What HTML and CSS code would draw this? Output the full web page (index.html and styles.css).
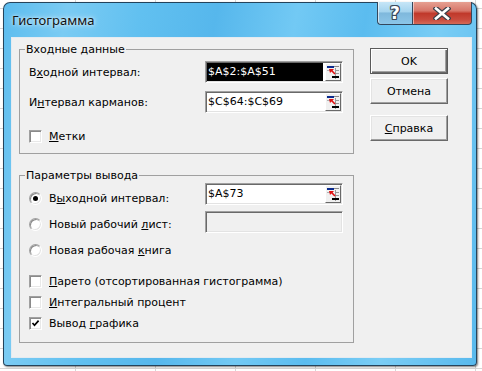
FILE: index.html
```html
<!DOCTYPE html>
<html lang="ru">
<head>
<meta charset="utf-8">
<title>Гистограмма</title>
<link rel="stylesheet" href="styles.css">
</head>
<body>
<div class="window">
  <div class="titlebar">
    <div class="title">Гистограмма</div>
    <div class="caption">
      <div class="cbtn help"><span class="qmark">?</span></div>
      <div class="cbtn close">
        <svg width="18" height="13" viewBox="0 0 18 13">
          <path d="M3 1.5 L15 11.5 M15 1.5 L3 11.5" stroke="#3a3f48" stroke-width="5" stroke-linecap="square" fill="none"/>
          <path d="M3 1.5 L15 11.5 M15 1.5 L3 11.5" stroke="#ffffff" stroke-width="2.6" stroke-linecap="square" fill="none"/>
        </svg>
      </div>
    </div>
  </div>
  <div class="client">
    <div class="groups">
      <fieldset class="group g1">
        <legend>Входные данные</legend>
        <div class="row">
          <span class="lbl">В<u>х</u>одной интервал:</span>
          <div class="refedit"><span class="val sel">$A$2:$A$51</span><span class="refbtn"><svg class="refico" width="12" height="13" viewBox="0 0 12 13"><rect x="0" y="0" width="7" height="2" fill="#0a2a8c"/><rect x="7" y="0" width="5" height="1" fill="#8a8a8a"/><rect x="8" y="2" width="1" height="11" fill="#9a9a9a"/><rect x="9" y="4" width="3" height="1" fill="#9a9a9a"/><rect x="9" y="7" width="3" height="1" fill="#9a9a9a"/><rect x="0" y="4" width="3" height="1" fill="#b0b0b0"/><path d="M2 3 L7 3 L5.6 4.4 L8.6 7.4 L7.4 8.6 L4.4 5.6 L3 7 Z" fill="#e01010"/><rect x="5" y="10" width="7" height="2" fill="#000"/></svg></span></div>
        </div>
        <div class="row">
          <span class="lbl">И<u>н</u>тервал карманов:</span>
          <div class="refedit"><span class="val">$C$64:$C$69</span><span class="refbtn"><svg class="refico" width="12" height="13" viewBox="0 0 12 13"><rect x="0" y="0" width="7" height="2" fill="#0a2a8c"/><rect x="7" y="0" width="5" height="1" fill="#8a8a8a"/><rect x="8" y="2" width="1" height="11" fill="#9a9a9a"/><rect x="9" y="4" width="3" height="1" fill="#9a9a9a"/><rect x="9" y="7" width="3" height="1" fill="#9a9a9a"/><rect x="0" y="4" width="3" height="1" fill="#b0b0b0"/><path d="M2 3 L7 3 L5.6 4.4 L8.6 7.4 L7.4 8.6 L4.4 5.6 L3 7 Z" fill="#e01010"/><rect x="5" y="10" width="7" height="2" fill="#000"/></svg></span></div>
        </div>
        <div class="opt chk-first">
          <span class="cb"></span><span><u>М</u>етки</span>
        </div>
      </fieldset>

      <fieldset class="group g2">
        <legend>Параметры вывода</legend>
        <div class="out">
          <div class="radios">
            <div class="opt"><span class="rb on"></span><span>В<u>ы</u>ходной интервал:</span></div>
            <div class="opt"><span class="rb"></span><span>Новый рабочий <u>л</u>ист:</span></div>
            <div class="opt"><span class="rb"></span><span>Новая рабочая <u>к</u>нига</span></div>
          </div>
          <div class="inputs">
            <div class="refedit"><span class="val">$A$73</span><span class="refbtn"><svg class="refico" width="12" height="13" viewBox="0 0 12 13"><rect x="0" y="0" width="7" height="2" fill="#0a2a8c"/><rect x="7" y="0" width="5" height="1" fill="#8a8a8a"/><rect x="8" y="2" width="1" height="11" fill="#9a9a9a"/><rect x="9" y="4" width="3" height="1" fill="#9a9a9a"/><rect x="9" y="7" width="3" height="1" fill="#9a9a9a"/><rect x="0" y="4" width="3" height="1" fill="#b0b0b0"/><path d="M2 3 L7 3 L5.6 4.4 L8.6 7.4 L7.4 8.6 L4.4 5.6 L3 7 Z" fill="#e01010"/><rect x="5" y="10" width="7" height="2" fill="#000"/></svg></span></div>
            <div class="refedit disabled"><span class="val"></span></div>
          </div>
        </div>
        <div class="checks">
          <div class="opt"><span class="cb"></span><span><u>П</u>арето (отсортированная гистограмма)</span></div>
          <div class="opt"><span class="cb"></span><span><u>И</u>нтегральный процент</span></div>
          <div class="opt"><span class="cb checked"><svg width="9" height="9" viewBox="0 0 9 9"><path d="M1.5 4 L3.5 6.2 L7.6 1.6" stroke="#000" stroke-width="1.7" fill="none"/></svg></span><span>Вывод <u>г</u>рафика</span></div>
        </div>
      </fieldset>
    </div>

    <div class="buttons">
      <div class="btn default">OK</div>
      <div class="btn">Отмена</div>
      <div class="btn help-btn"><span><u>С</u>правка</span></div>
    </div>
  </div>
</div>
</body>
</html>
```
FILE: styles.css
```css
* { box-sizing: border-box; }

body {
  margin: 0;
  width: 482px;
  height: 371px;
  overflow: hidden;
  background-color: #ffffff;
  background-image:
    linear-gradient(to right, #d6d6d6 1px, transparent 1px),
    linear-gradient(to bottom, #d6d6d6 1px, transparent 1px);
  background-size: 80px 20px;
  background-position: 315px 0, 0 8px;
  font-family: "DejaVu Sans", sans-serif;
  font-size: 11px;
  color: #000;
}

.window {
  margin: 2px 0 0 3px;
  width: 474px;
  height: 364px;
  border: 1px solid rgba(25, 45, 65, 0.85);
  border-radius: 7px 7px 4px 4px;
  background:
    linear-gradient(100deg, #5cbcee 0%, #7acbf3 12%, #61c0f0 26%, #56b7ec 40%, #72c9f4 55%, #5bbcef 68%, #7acdf5 82%, #58b9ed 100%);
  padding: 0 4px 7px 7px;
  display: flex;
  flex-direction: column;
  box-shadow: 1px 1px 2px rgba(0, 0, 0, 0.5);
}

.titlebar {
  height: 34px;
  display: flex;
  align-items: center;
  justify-content: space-between;
}

.title {
  font-family: "Noto Sans", "Open Sans", sans-serif;
  font-size: 13px;
  padding-left: 1px;
  padding-bottom: 1px;
  color: #111;
  text-shadow: 0 0 6px rgba(255, 255, 255, 0.9), 0 0 3px rgba(255, 255, 255, 0.7);
}

.caption {
  align-self: flex-start;
  margin-top: -1px;
  display: flex;
  height: 23px;
}

.cbtn {
  height: 23px;
  display: flex;
  align-items: center;
  justify-content: center;
  border: 1px solid #34475c;
  border-top: none;
}

.help {
  width: 35px;
  border-right: none;
  border-radius: 0 0 0 4px;
  background: linear-gradient(to bottom, #c6e6f7 0%, #a4d3ee 45%, #7fb8dc 50%, #8cc6e8 100%);
  box-shadow: inset 1px 0 0 rgba(255, 255, 255, 0.6);
}

.qmark {
  font-family: "DejaVu Sans", sans-serif;
  font-weight: bold;
  font-size: 17px;
  line-height: 17px;
  color: #fff;
  text-shadow: 1px 0 0 #3a4a5e, -1px 0 0 #3a4a5e, 0 1px 0 #3a4a5e, 0 -1px 0 #3a4a5e,
    1px 1px 0 #3a4a5e, -1px -1px 0 #3a4a5e, 1px -1px 0 #3a4a5e, -1px 1px 0 #3a4a5e;
}

.close {
  width: 60px;
  border-radius: 0 0 4px 0;
  background: linear-gradient(to bottom, #e6a092 0%, #d7776a 40%, #c0392b 52%, #c94b3d 80%, #d66a57 100%);
  box-shadow: inset 1px 0 0 rgba(255, 255, 255, 0.5);
}

.client {
  flex: 1;
  background: #f0f0f0;
  border: 1px solid #e4ebf1;
  display: grid;
  grid-template-columns: 335px 78px;
  column-gap: 16px;
  align-items: start;
  padding: 5px 0 0 7px;
}

.groups {
  display: flex;
  flex-direction: column;
  gap: 15px;
}

.group {
  margin: 0;
  min-width: 0;
  border: 1px solid #a0a0a0;
  padding: 0 10px 0 9px;
}

.group legend {
  margin-left: -4px;
  padding: 0 1px;
  line-height: 13px;
}

.g1 {
  padding-top: 5px;
  padding-bottom: 9px;
}

.row {
  display: flex;
  align-items: center;
  height: 22px;
}

.row + .row {
  margin-top: 8px;
}

.lbl {
  width: 176px;
}

.refedit {
  margin-left: auto;
  width: 138px;
  height: 22px;
  display: flex;
  padding: 1px;
  border: 1px solid;
  border-color: #a0a0a0 #ffffff #ffffff #a0a0a0;
  box-shadow: inset 1px 1px 0 #696969, inset -1px -1px 0 #e3e3e3;
  background: #ffffff;
}

.refedit.disabled {
  background: #f0f0f0;
}

.val {
  flex: 1;
  line-height: 18px;
  padding-left: 1px;
  white-space: nowrap;
}

.val.sel {
  background: #000;
  color: #fff;
  margin-right: 2px;
}

.refbtn {
  width: 16px;
  height: 18px;
  background: #f0f0f0;
  border: 1px solid;
  border-color: #ffffff #696969 #696969 #ffffff;
  display: flex;
  align-items: center;
  justify-content: center;
}

.opt {
  display: flex;
  align-items: center;
  height: 16px;
  gap: 7px;
  white-space: nowrap;
}

.chk-first {
  margin-top: 15px;
}

.cb {
  width: 13px;
  height: 13px;
  flex: none;
  background: #ffffff;
  border: 1px solid;
  border-color: #a0a0a0 #ffffff #ffffff #a0a0a0;
  box-shadow: inset 1px 1px 0 #8a8a8a, inset -1px -1px 0 #e8e8e8;
  display: flex;
  align-items: center;
  justify-content: center;
}

.rb {
  width: 13px;
  height: 13px;
  flex: none;
  border-radius: 50%;
  background: #ffffff;
  border: 1px solid;
  border-color: #a0a0a0 #ffffff #ffffff #a0a0a0;
  box-shadow: inset 1px 1px 0 #8a8a8a, inset -1px -1px 0 #e3e3e3;
  display: flex;
  align-items: center;
  justify-content: center;
}

.rb.on::after {
  content: "";
  width: 5px;
  height: 5px;
  border-radius: 50%;
  background: #000;
}

.g2 {
  padding-top: 1px;
  padding-bottom: 11px;
}

.out {
  display: flex;
}

.radios {
  display: flex;
  flex-direction: column;
  gap: 10px;
  margin-top: 7px;
}

.inputs {
  margin-left: auto;
  display: flex;
  flex-direction: column;
  gap: 6px;
}

.checks {
  margin-top: 15px;
  display: flex;
  flex-direction: column;
  gap: 5px;
}

.buttons {
  display: flex;
  flex-direction: column;
  margin-top: 5px;
}

.btn {
  height: 26px;
  display: flex;
  align-items: center;
  justify-content: center;
  background: #f0f0f0;
  border: 1px solid;
  border-color: #ffffff #696969 #696969 #ffffff;
  box-shadow: inset -1px -1px 0 #a0a0a0, inset 1px 1px 0 #e3e3e3;
}

.btn.default {
  border-color: #5a5a5a;
  box-shadow: inset 1px 1px 0 #ffffff, inset -1px -1px 0 #696969, inset -2px -2px 0 #a0a0a0;
}

.btn + .btn {
  margin-top: 4px;
}

.btn.help-btn {
  margin-top: 11px;
}
```
